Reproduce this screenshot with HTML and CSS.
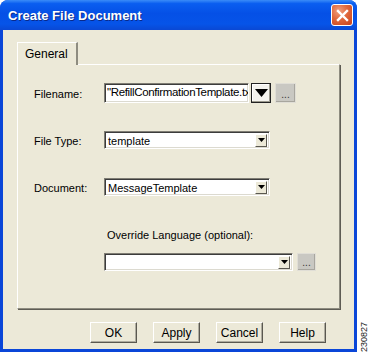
FILE: index.html
```html
<!DOCTYPE html>
<html lang="en">
<head>
  <meta charset="UTF-8" />
  <title>Create File Document</title>
  <link rel="stylesheet" href="styles.css">
</head>
<body>
  <div class="window">
    <div class="titlebar">
      <span class="title">Create File Document</span>
      <span class="close">
        <svg width="13" height="13" viewBox="0 0 13 13"><path d="M2 2 L11 11 M11 2 L2 11" stroke="#fff" stroke-width="2.4" stroke-linecap="square"/></svg>
      </span>
    </div>
    <div class="client">
      <div class="tabs">
        <div class="tab">General</div>
      </div>
      <div class="panel">
        <div class="row row-filename">
          <span class="label">Filename:</span>
          <div class="textbox filename-box">"RefillConfirmationTemplate.tx</div>
          <div class="big-drop">
            <svg width="13" height="8" viewBox="0 0 13 8"><path d="M0 0 H13 L6.5 8 Z" fill="#000"/></svg>
          </div>
          <div class="dots-btn">...</div>
        </div>
        <div class="row row-type">
          <span class="label">File Type:</span>
          <div class="combo combo-mid">
            <span class="combo-text">template</span>
            <span class="drop"><svg width="7" height="4" viewBox="0 0 7 4"><path d="M0 0 H7 L3.5 4 Z" fill="#000"/></svg></span>
          </div>
        </div>
        <div class="row row-doc">
          <span class="label">Document:</span>
          <div class="combo combo-mid">
            <span class="combo-text">MessageTemplate</span>
            <span class="drop"><svg width="7" height="4" viewBox="0 0 7 4"><path d="M0 0 H7 L3.5 4 Z" fill="#000"/></svg></span>
          </div>
        </div>
        <div class="override">
          <div class="override-label">Override Language (optional):</div>
          <div class="override-row">
            <div class="combo combo-wide">
              <span class="combo-text"></span>
              <span class="drop"><svg width="7" height="4" viewBox="0 0 7 4"><path d="M0 0 H7 L3.5 4 Z" fill="#000"/></svg></span>
            </div>
            <div class="dots-btn small">...</div>
          </div>
        </div>
      </div>
      <div class="buttons">
        <button>OK</button>
        <button>Apply</button>
        <button>Cancel</button>
        <button>Help</button>
      </div>
    </div>
  </div>
  <div class="fig-id">230827</div>
</body>
</html>
```

FILE: styles.css
```css
* {
  margin: 0;
  padding: 0;
  box-sizing: border-box;
}

body {
  background: #fff;
  width: 369px;
  height: 354px;
  display: flex;
  font-family: 'Liberation Sans', Arial, sans-serif;
  font-size: 11px;
  color: #000;
  overflow: hidden;
}

.window {
  width: 358px;
  height: 352px;
  display: flex;
  flex-direction: column;
  background: #0a46d8;
  border-radius: 8px 8px 0 0;
  padding: 0 3px 3px 3px;
}

.titlebar {
  height: 30px;
  margin: 0 -3px;
  display: flex;
  align-items: center;
  justify-content: space-between;
  padding: 0 4px 0 8px;
  border-radius: 8px 8px 0 0;
  background: linear-gradient(#3a8cf8 0%, #0a5ef0 12%, #0550e6 45%, #0654e8 80%, #0a48d4 100%);
}

.title {
  color: #fff;
  font-weight: bold;
  font-size: 13px;
  text-shadow: 1px 1px 0 #0a2a8a;
}

.close {
  width: 22px;
  height: 22px;
  border: 1px solid #fff;
  border-radius: 3px;
  background: radial-gradient(circle at 35% 30%, #f0a080 0%, #e0683c 45%, #c8401c 100%);
  display: flex;
  align-items: center;
  justify-content: center;
}

.client {
  flex: 1;
  background: #ece9d8;
  display: flex;
  flex-direction: column;
  padding: 12px 14px 0 14px;
}

.tabs {
  height: 22px;
  display: flex;
}

.tab {
  width: 61px;
  height: 23px;
  background: #ece9d8;
  border-left: 1px solid #fff;
  border-top: 1px solid #fff;
  border-right: 2px solid #8e8c80;
  font-size: 12px;
  padding: 4px 0 0 7px;
  position: relative;
  z-index: 1;
}

.panel {
  height: 245px;
  border-top: 1px solid #fff;
  border-left: 1px solid #fff;
  border-right: 1px solid #8e8c80;
  border-bottom: 1px solid #8e8c80;
  box-shadow: 1px 1px 0 #5e5c54;
  padding: 18px 0 0 16px;
}

.row {
  display: flex;
  align-items: center;
}

.label {
  width: 70px;
  padding-top: 2px;
  font-size: 11px;
}

.textbox,
.combo {
  background: #fff;
  border-top: 1px solid #7f7d74;
  border-left: 1px solid #7f7d74;
  border-right: 1px solid #fff;
  border-bottom: 1px solid #fff;
  box-shadow: inset 1px 1px 0 #3c3c3c, inset -1px -1px 0 #dcdad0;
  white-space: nowrap;
  overflow: hidden;
}

.filename-box {
  width: 145px;
  height: 20px;
  font-size: 11.5px;
  letter-spacing: -0.35px;
  padding: 2px 0 0 2px;
}

.big-drop {
  width: 20px;
  height: 20px;
  margin-left: 2px;
  border: 1px solid #222;
  background: #f4f3ee;
  box-shadow: inset -1px -1px 0 #9a988c, inset 1px 1px 0 #fff;
  display: flex;
  align-items: center;
  justify-content: center;
}

.dots-btn {
  width: 21px;
  height: 20px;
  margin-left: 4px;
  background: #c9c8c2;
  border: 1px solid #e0ded6;
  box-shadow: inset -1px -1px 0 #a8a69e;
  display: flex;
  justify-content: center;
  align-items: flex-end;
  padding-bottom: 3px;
  font-size: 10px;
  line-height: 8px;
  color: #333;
}

.dots-btn.small {
  width: 19px;
  height: 18px;
  margin-left: 4px;
}

.row-filename {
  height: 20px;
}

.row-type {
  margin-top: 28px;
  height: 18px;
}

.row-doc {
  margin-top: 29px;
  height: 18px;
}

.combo {
  height: 18px;
  display: flex;
  align-items: center;
  justify-content: space-between;
  padding: 0 2px 0 3px;
}

.combo-mid {
  width: 166px;
}

.combo-wide {
  width: 189px;
}

.combo-text {
  font-size: 11px;
  padding-top: 1px;
}

.drop {
  width: 12px;
  height: 13px;
  background: #ece9d8;
  border-top: 1px solid #fff;
  border-left: 1px solid #fff;
  border-right: 1px solid #5a5850;
  border-bottom: 1px solid #5a5850;
  display: flex;
  align-items: center;
  justify-content: center;
}

.override {
  margin: 33px 0 0 70px;
}

.override-label {
  font-size: 11px;
  padding-left: 3px;
  height: 15px;
}

.override-row {
  margin-top: 9px;
  display: flex;
  align-items: center;
}

.buttons {
  display: flex;
  justify-content: flex-end;
  gap: 16px;
  margin-top: 13px;
  padding-right: 14px;
}

button {
  width: 47px;
  height: 21px;
  font-family: 'Liberation Sans', Arial, sans-serif;
  font-size: 12px;
  background: #ece9d8;
  color: #000;
  border-top: 1px solid #fff;
  border-left: 1px solid #fff;
  border-right: 1px solid #5a5850;
  border-bottom: 1px solid #5a5850;
  box-shadow: inset -1px -1px 0 #aeaca0;
}

.fig-id {
  writing-mode: vertical-rl;
  transform: rotate(180deg);
  font-family: 'Liberation Sans', Arial, sans-serif;
  font-size: 9px;
  color: #222;
  align-self: flex-end;
  margin: 0 0 2px 2px;
}
```
